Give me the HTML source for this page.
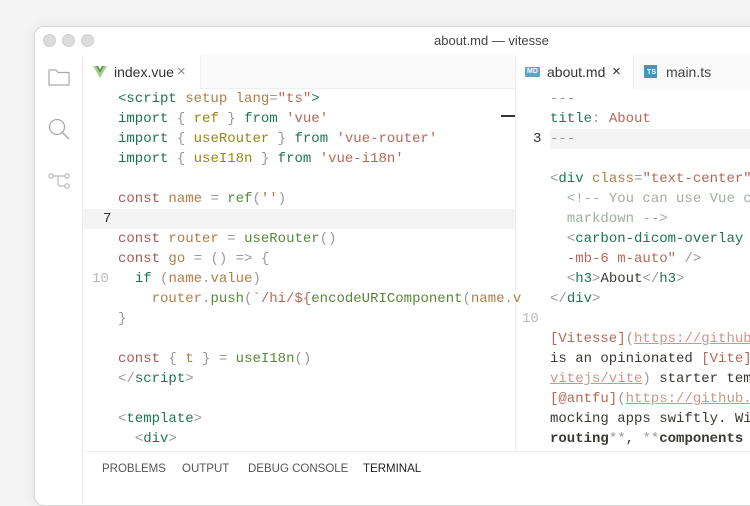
<!DOCTYPE html>
<html><head><meta charset="utf-8"><style>
*{margin:0;padding:0;box-sizing:border-box}
body{width:750px;height:480px;overflow:hidden;background:#f4f4f4;font-family:"Liberation Sans",sans-serif;position:relative}
.win{position:absolute;left:34px;top:26px;width:740px;height:480px;background:#fff;border:1px solid #d8d8d8;border-radius:10px;overflow:hidden;box-shadow:0 0 14px rgba(0,0,0,.08)}
.dot{position:absolute;top:7px;width:13px;height:13px;border-radius:50%;background:#dcdcdc;border:1px solid #d0d0d0}
.title{position:absolute;left:0;top:0;width:100%;height:28px;text-align:left;font-size:13px;color:#444}
.act{position:absolute;left:0;top:28px;width:48px;height:450px;border-right:1px solid #eee;background:#fff}
.tabs{position:absolute;top:28px;height:34px;border-bottom:1px solid #eee;background:#fafafa}
.tab{position:absolute;top:0;height:34px;font-size:14px;color:#333;line-height:34px;background:#fff}
.code{position:absolute;font-family:"Liberation Mono",monospace;font-size:14px;white-space:pre;color:#393a34}
.l{position:absolute;height:20px;line-height:20px}
.n{position:absolute;font-family:"Liberation Mono",monospace;font-size:14px;line-height:20px;color:#bbb}
.k{color:#1e754f}.s{color:#b56959}.f{color:#59873a}.v{color:#b07d48}.c{color:#ab5959}.p{color:#999}.a{color:#998418}.cm{color:#a0ada0}.u{text-decoration:underline;color:#b56959;opacity:.7}
.t{color:#1e754f}.at{color:#b07d48}
.panel{position:absolute;left:48px;top:424px;width:700px;height:60px;border-top:1px solid #eee;background:#fff;font-size:11.5px;color:#555}
</style></head><body>
<div class="win">
<div class="dot" style="left:8px"></div><div class="dot" style="left:27px"></div><div class="dot" style="left:46px"></div>
<div class="title"><span style="position:absolute;left:399px;top:6px">about.md — vitesse</span></div>
<div class="act">
<svg style="position:absolute;left:13px;top:13px" width="22" height="18" viewBox="0 0 22 18"><path d="M1 2h7l2 2.5h11V17H1z" fill="none" stroke="#aaa" stroke-width="1.2"/></svg>
<svg style="position:absolute;left:13px;top:63px" width="24" height="24" viewBox="0 0 24 24"><circle cx="9" cy="9" r="7.5" fill="none" stroke="#aaa" stroke-width="1.3"/><path d="M14.5 14.5L21 21" stroke="#aaa" stroke-width="1.4"/></svg>
<svg style="position:absolute;left:13px;top:116px" width="24" height="20" viewBox="0 0 24 20"><circle cx="3" cy="5" r="2.2" fill="none" stroke="#aaa"/><circle cx="19" cy="5" r="2.2" fill="none" stroke="#aaa"/><circle cx="19" cy="15" r="2.2" fill="none" stroke="#aaa"/><path d="M5 5h12M10 5v8a2 2 0 0 0 2 2h5" fill="none" stroke="#aaa"/></svg>
</div>
<div class="tabs" style="left:48px;width:432px">
<div class="tab" style="left:0;width:118px;border-right:1px solid #eee">
<svg style="position:absolute;left:10px;top:11px" width="14" height="12" viewBox="0 0 14 12"><path d="M0 0l7 12 7-12h-3L7 7 3 0z" fill="#9fd38a"/><path d="M3 0l4 7 4-7H9L7 3.5 5 0z" fill="#5a8a4a"/></svg>
<span style="position:absolute;left:31px">index.vue</span><span style="position:absolute;left:94px;color:#888;font-size:15px">×</span></div>
</div>
<div class="tabs" style="left:480px;width:270px;border-left:1px solid #eee">
<div class="tab" style="left:0;width:118px;border-right:1px solid #eee">
<span style="position:absolute;left:9px;top:12px;width:15px;height:10px;background:#5ea6c8;border-radius:1px;font-size:7px;color:#fff;line-height:10px;text-align:center;font-weight:bold">MD</span>
<span style="position:absolute;left:31px">about.md</span><span style="position:absolute;left:96px;color:#333;font-size:15px">×</span></div>
<div class="tab" style="left:119px;width:151px;background:#fafafa;color:#444">
<span style="position:absolute;left:9px;top:10px;width:13px;height:13px;background:#4a93b8;font-size:7px;color:#fff;line-height:16px;text-align:right;padding-right:1px;font-weight:bold">TS</span>
<span style="position:absolute;left:31px">main.ts</span></div>
</div>
<div style="position:absolute;left:48px;top:182px;width:432px;height:20px;background:#f4f4f4"></div>
<div style="position:absolute;left:466px;top:88px;width:14px;height:2px;background:#333"></div>
<div style="position:absolute;left:480px;top:62px;width:1px;height:362px;background:#eee"></div>
<div class="n" style="left:68px;top:182px;color:#333">7</div>
<div class="n" style="left:57px;top:242px">10</div>
<div class="code" style="left:83px;top:62px">
<div class="l" style="top:0"><span class="t">&lt;script</span> <span class="at">setup</span> <span class="at">lang</span><span class="p">=</span><span class="s">"ts"</span><span class="t">&gt;</span></div>
<div class="l" style="top:20px"><span class="k">import</span> <span class="p">{</span> <span class="a">ref</span> <span class="p">}</span> <span class="k">from</span> <span class="s">'vue'</span></div>
<div class="l" style="top:40px"><span class="k">import</span> <span class="p">{</span> <span class="a">useRouter</span> <span class="p">}</span> <span class="k">from</span> <span class="s">'vue-router'</span></div>
<div class="l" style="top:60px"><span class="k">import</span> <span class="p">{</span> <span class="a">useI18n</span> <span class="p">}</span> <span class="k">from</span> <span class="s">'vue-i18n'</span></div>
<div class="l" style="top:100px"><span class="c">const</span> <span class="v">name</span> <span class="p">=</span> <span class="f">ref</span><span class="p">(</span><span class="s">''</span><span class="p">)</span></div>
<div class="l" style="top:140px"><span class="c">const</span> <span class="v">router</span> <span class="p">=</span> <span class="f">useRouter</span><span class="p">()</span></div>
<div class="l" style="top:160px"><span class="c">const</span> <span class="v">go</span> <span class="p">=</span> <span class="p">()</span> <span class="p">=&gt;</span> <span class="p">{</span></div>
<div class="l" style="top:180px">  <span class="k">if</span> <span class="p">(</span><span class="v">name</span><span class="p">.</span><span class="v">value</span><span class="p">)</span></div>
<div class="l" style="top:200px">    <span class="v">router</span><span class="p">.</span><span class="f">push</span><span class="p">(</span><span class="s">`/hi/${</span><span class="f">encodeURIComponent</span><span class="p">(</span><span class="v">name</span><span class="p">.</span><span class="v">v</span></div>
<div class="l" style="top:220px"><span class="p">}</span></div>
<div class="l" style="top:260px"><span class="c">const</span> <span class="p">{</span> <span class="v">t</span> <span class="p">}</span> <span class="p">=</span> <span class="f">useI18n</span><span class="p">()</span></div>
<div class="l" style="top:280px"><span class="p">&lt;/</span><span class="t">script</span><span class="p">&gt;</span></div>
<div class="l" style="top:320px"><span class="p">&lt;</span><span class="t">template</span><span class="p">&gt;</span></div>
<div class="l" style="top:340px">  <span class="p">&lt;</span><span class="t">div</span><span class="p">&gt;</span></div>
</div>
<div style="position:absolute;left:515px;top:102px;width:240px;height:20px;background:#f4f4f4"></div>
<div class="n" style="left:498px;top:102px;color:#333">3</div>
<div class="n" style="left:487px;top:282px">10</div>
<div class="code" style="left:515px;top:62px;color:#393a34">
<div class="l" style="top:0"><span class="p">---</span></div>
<div class="l" style="top:20px"><span class="k">title</span><span class="p">:</span> <span class="s">About</span></div>
<div class="l" style="top:40px"><span class="p">---</span></div>
<div class="l" style="top:80px"><span class="p">&lt;</span><span class="t">div</span> <span class="at">class</span><span class="p">=</span><span class="s">"text-center"</span><span class="p">&gt;</span></div>
<div class="l" style="top:100px">  <span class="cm">&lt;!-- You can use Vue co</span></div>
<div class="l" style="top:120px">  <span class="cm">markdown --&gt;</span></div>
<div class="l" style="top:140px">  <span class="p">&lt;</span><span class="t">carbon-dicom-overlay</span> <span class="at">c</span></div>
<div class="l" style="top:160px">  <span class="s">-mb-6 m-auto"</span> <span class="p">/&gt;</span></div>
<div class="l" style="top:180px">  <span class="p">&lt;</span><span class="t">h3</span><span class="p">&gt;</span>About<span class="p">&lt;/</span><span class="t">h3</span><span class="p">&gt;</span></div>
<div class="l" style="top:200px"><span class="p">&lt;/</span><span class="t">div</span><span class="p">&gt;</span></div>
<div class="l" style="top:240px"><span class="s">[Vitesse]</span><span class="p">(</span><span class="u">https://github</span></div>
<div class="l" style="top:260px">is an opinionated <span class="s">[Vite]</span></div>
<div class="l" style="top:280px"><span class="u">vitejs/vite</span><span class="p">)</span> starter temp</div>
<div class="l" style="top:300px"><span class="s">[@antfu]</span><span class="p">(</span><span class="u">https://github.c</span></div>
<div class="l" style="top:320px">mocking apps swiftly. Wit</div>
<div class="l" style="top:340px"><b>routing</b><span class="p">**</span>, <span class="p">**</span><b>components c</b></div>
</div>
<div class="panel">
<span style="position:absolute;left:19px;top:11px">PROBLEMS</span>
<span style="position:absolute;left:99px;top:11px">OUTPUT</span>
<span style="position:absolute;left:165px;top:11px">DEBUG CONSOLE</span>
<span style="position:absolute;left:280px;top:11px;color:#222">TERMINAL</span>
</div>
</div>
</body></html>
